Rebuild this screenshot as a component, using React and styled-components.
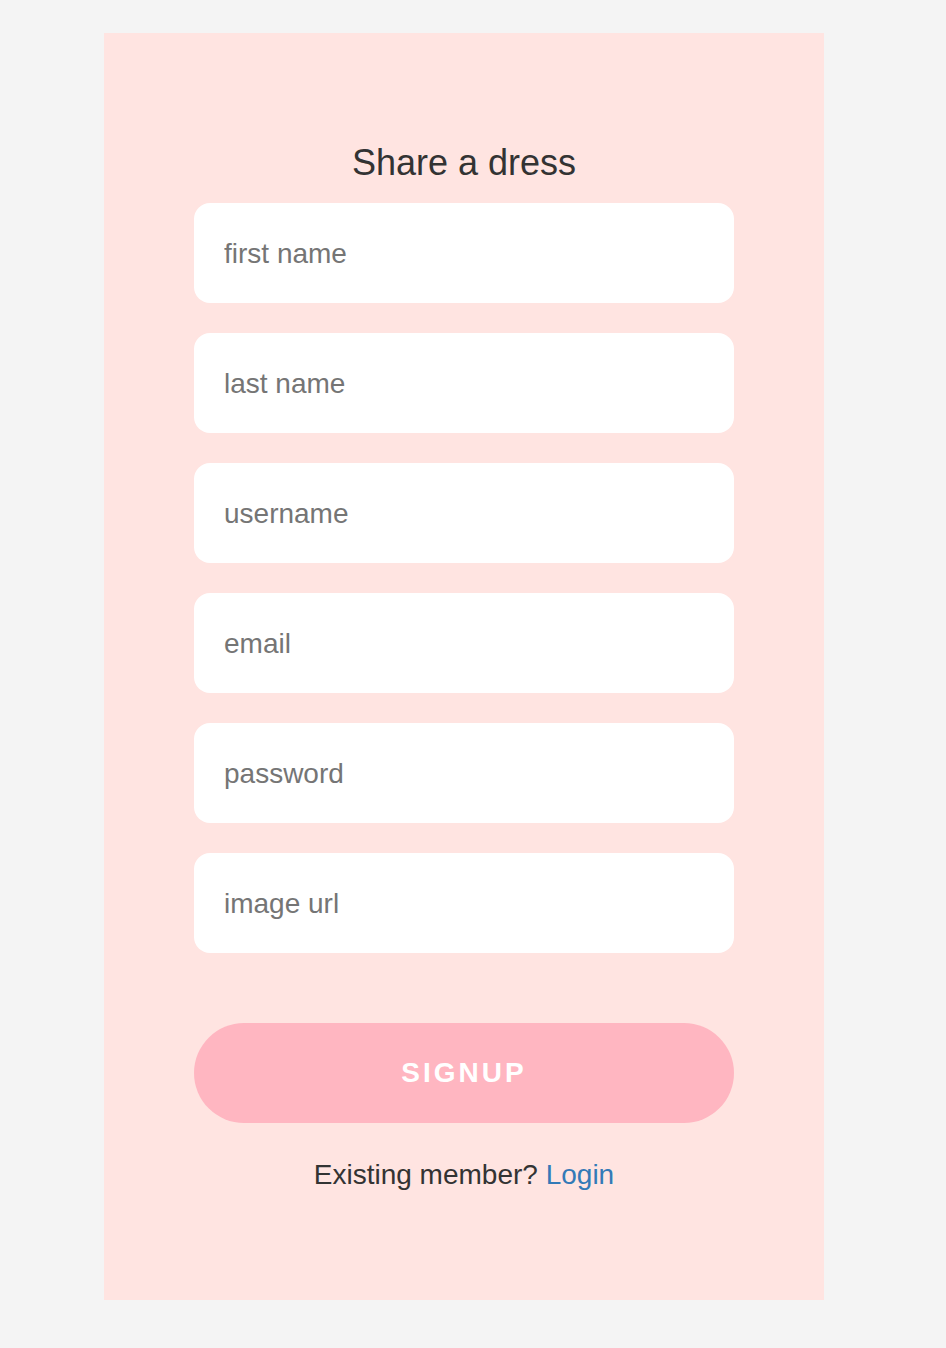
import { createGlobalStyle, styled } from "styled-components";

const GlobalStyle = createGlobalStyle`
  html, body {
    margin: 0;
    padding: 0;
    background: #f4f4f4;
    font-family: "Liberation Sans", Arial, Helvetica, sans-serif;
  }
`;

const fields = [
  "first name",
  "last name",
  "username",
  "email",
  "password",
  "image url",
];

const App = () => {
  return (
    <>
      <GlobalStyle />
      <Page>
        <Card>
          <Title>Share a dress</Title>
          <Form onSubmit={(e) => e.preventDefault()}>
            <Fields>
              {fields.map((f) => (
                <Input
                  key={f}
                  type={f === "password" ? "password" : "text"}
                  placeholder={f}
                />
              ))}
            </Fields>
            <Button type="submit">Signup</Button>
          </Form>
          <Footer>
            Existing member? <a href="#login">Login</a>
          </Footer>
        </Card>
      </Page>
    </>
  );
};

const Page = styled.div`
  padding: 33px 0 48px 104px;
`;

const Card = styled.section`
  width: 720px;
  height: 1267px;
  box-sizing: border-box;
  background: #ffe4e1;
  padding-top: 109px;
  display: flex;
  flex-direction: column;
  align-items: center;
`;

const Title = styled.h1`
  margin: 0 0 20px;
  font-size: 36px;
  font-weight: 400;
  line-height: 41px;
  color: #333;
`;

const Form = styled.form`
  width: 540px;
  display: flex;
  flex-direction: column;
`;

const Fields = styled.div`
  display: flex;
  flex-direction: column;
  gap: 30px;
`;

const Input = styled.input`
  height: 100px;
  box-sizing: border-box;
  border: none;
  border-radius: 16px;
  background: #fff;
  padding: 2px 30px 0;
  font-family: inherit;
  font-size: 28px;
  color: #333;
  outline: none;

  &::placeholder {
    color: #757575;
  }
`;

const Button = styled.button`
  margin-top: 70px;
  height: 100px;
  border: none;
  border-radius: 50px;
  background: #ffb6c1;
  color: #fff;
  font-family: inherit;
  font-size: 28px;
  font-weight: 700;
  letter-spacing: 3px;
  text-transform: uppercase;
  cursor: pointer;
`;

const Footer = styled.p`
  margin: 36px 0 0;
  font-size: 28px;
  line-height: 32px;
  color: #333;

  a {
    color: #337ab7;
    text-decoration: none;
  }
`;

export default App;
